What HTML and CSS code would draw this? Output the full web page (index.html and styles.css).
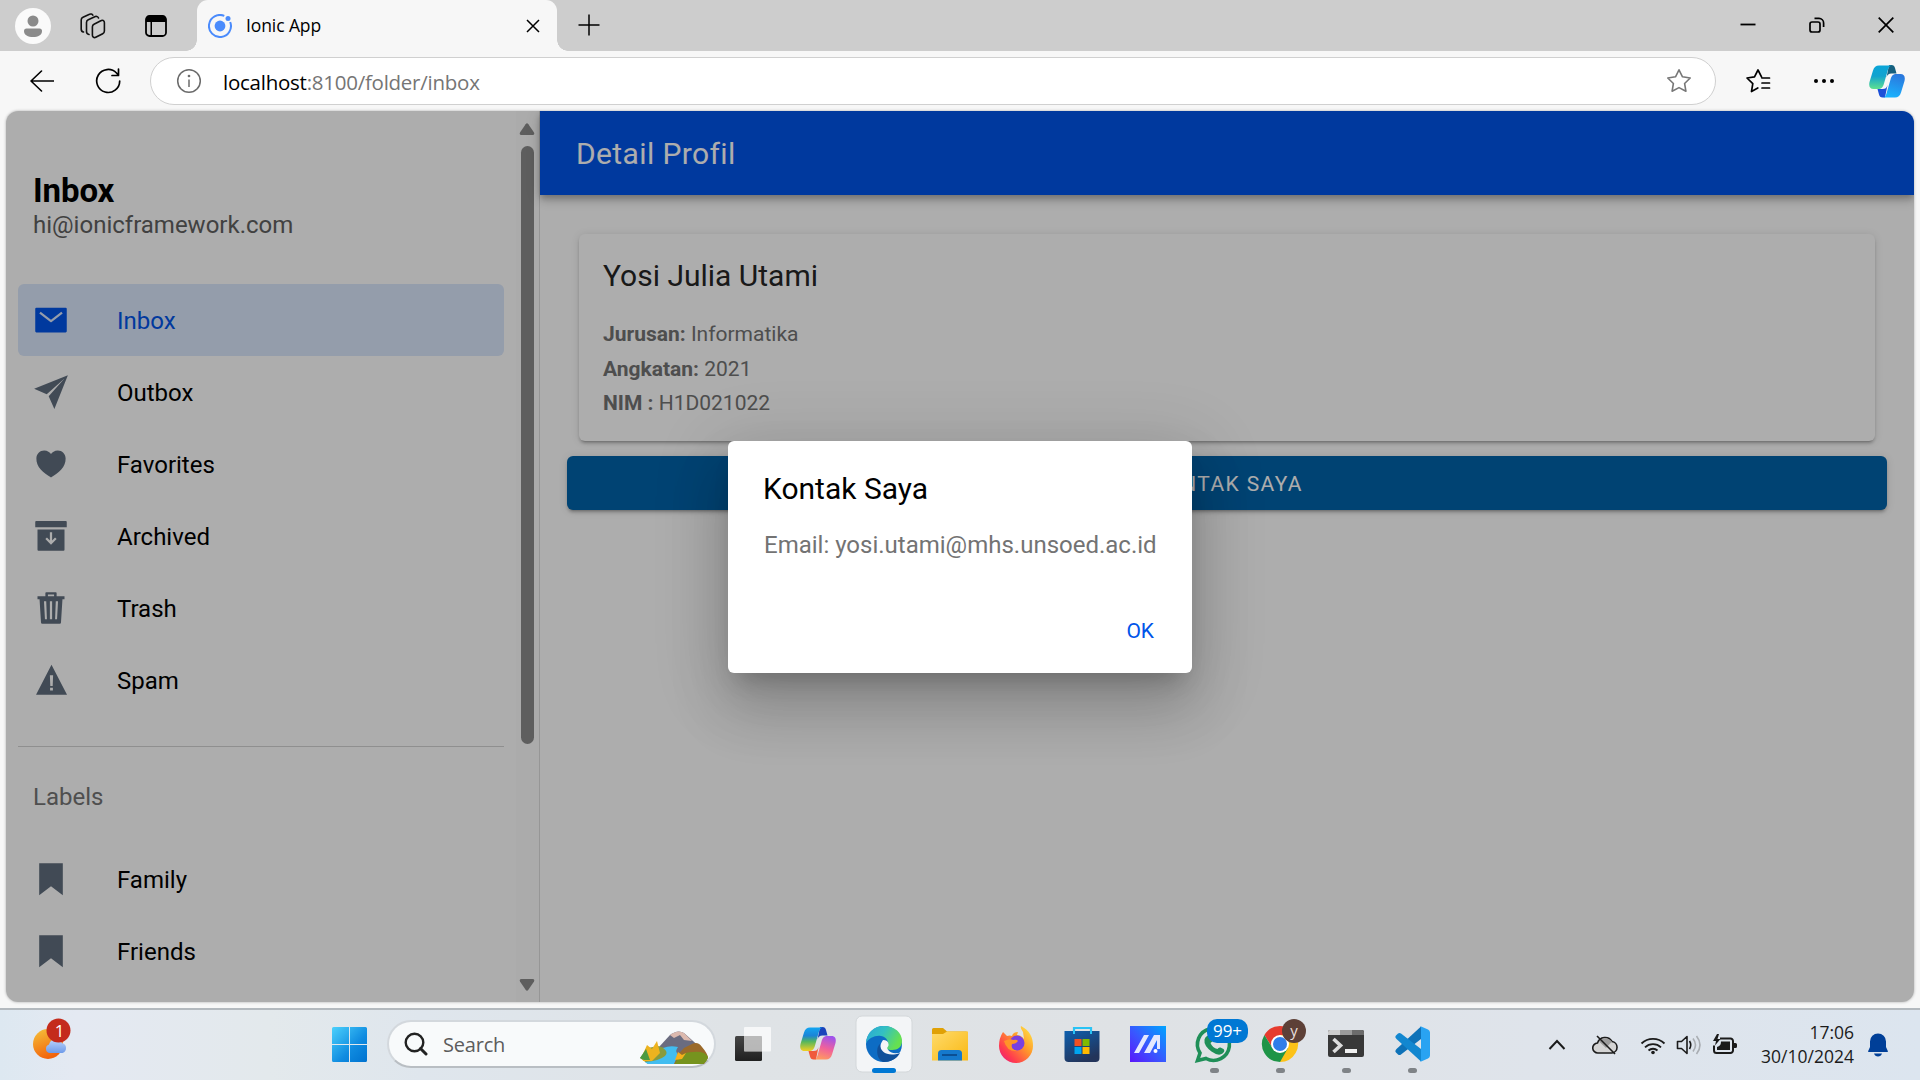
FILE: index.html
```html
<!DOCTYPE html>
<html lang="en">
<head>
<meta charset="utf-8">
<title>Ionic App</title>
<link rel="stylesheet" href="styles.css">
</head>
<body>
<svg width="0" height="0" class="defs" aria-hidden="true">
  <defs>
    <linearGradient id="gTeal" x1="0" y1="0" x2="0" y2="1"><stop offset="0" stop-color="#0aa5d8"/><stop offset=".45" stop-color="#12a3cf"/><stop offset="1" stop-color="#5ee08f"/></linearGradient>
    <linearGradient id="gBlue" x1=".6" y1="0" x2=".3" y2="1"><stop offset="0" stop-color="#2b78dd"/><stop offset="1" stop-color="#19b4ff"/></linearGradient>
    <linearGradient id="gRain" x1="0" y1="0" x2="0" y2="1"><stop offset="0" stop-color="#12a5f2"/><stop offset=".35" stop-color="#1b84d6"/><stop offset=".6" stop-color="#55b65d"/><stop offset="1" stop-color="#f2cf22"/></linearGradient>
    <linearGradient id="gPink" x1=".6" y1="0" x2=".3" y2="1"><stop offset="0" stop-color="#a053ea"/><stop offset=".5" stop-color="#f0619b"/><stop offset="1" stop-color="#ff9c5e"/></linearGradient>
    <linearGradient id="gSun" x1="0" y1="0" x2=".4" y2="1"><stop offset="0" stop-color="#f5c33b"/><stop offset="1" stop-color="#f2640c"/></linearGradient>
    <linearGradient id="gCloud" x1="0" y1="0" x2="0" y2="1"><stop offset="0" stop-color="#bcd4fb"/><stop offset="1" stop-color="#6e9bea"/></linearGradient>
    <linearGradient id="gWin" gradientUnits="userSpaceOnUse" x1="16" y1="17" x2="51" y2="52"><stop offset="0" stop-color="#4cd1fc"/><stop offset=".6" stop-color="#0f8be0"/><stop offset="1" stop-color="#0072cf"/></linearGradient>
    <linearGradient id="gDark" x1="0" y1="0" x2="0" y2="1"><stop offset="0" stop-color="#454545"/><stop offset="1" stop-color="#202020"/></linearGradient>
    <linearGradient id="gEdgeTop" x1="0" y1="0" x2="1" y2=".4"><stop offset="0" stop-color="#2aa6d6"/><stop offset=".5" stop-color="#33c0c3"/><stop offset="1" stop-color="#66e050"/></linearGradient>
    <linearGradient id="gFolder" x1="0" y1="0" x2="1" y2="1"><stop offset="0" stop-color="#ffdb6b"/><stop offset="1" stop-color="#f9b813"/></linearGradient>
    <linearGradient id="gFire" x1="1" y1="0" x2="0" y2="1"><stop offset="0" stop-color="#fff04a"/><stop offset=".4" stop-color="#ff9a2a"/><stop offset=".75" stop-color="#ff3a4f"/><stop offset="1" stop-color="#e0158a"/></linearGradient>
    <linearGradient id="gStore" x1="0" y1="0" x2=".5" y2="1"><stop offset="0" stop-color="#0d5fae"/><stop offset="1" stop-color="#23345a"/></linearGradient>
    <linearGradient id="gAsus" x1="1" y1="0" x2="0" y2="1"><stop offset="0" stop-color="#00a5ff"/><stop offset=".55" stop-color="#3a55ff"/><stop offset="1" stop-color="#5b16fa"/></linearGradient>
  </defs>
</svg>

<div class="tabs">
  <span class="avatar"><svg width="36" height="36" viewBox="0 0 36 36"><circle cx="18" cy="13" r="5.500" fill="#8b8b8b"/><path d="M9 23a2.500 2.500 0 0 1 2.500-2.500h13A2.500 2.500 0 0 1 27 23c0 4-4 6-9 6s-9-2-9-6z" fill="#8b8b8b"/></svg></span>
  <svg class="ws" width="26" height="26" viewBox="0 0 26 26" fill="none" stroke="#111" stroke-width="1.600" stroke-linejoin="round" stroke-linecap="round"><path d="M14 11.200 20.800 7.800a2.200 2.200 0 0 1 3.600 1.800v8.400a3 3 0 0 1-1.700 2.700l-7 3.600a2.200 2.200 0 0 1-3.300-2v-8.500a3 3 0 0 1 1.600-2.600z"/><path d="M9 21.500a3 3 0 0 1-2.500-3V9.500A3 3 0 0 1 8.300 6.800l7-3.200A2.400 2.400 0 0 1 18.500 5M3.500 19A3 3 0 0 1 1.200 16V7A3 3 0 0 1 3 4.300l6.500-3A2.400 2.400 0 0 1 12.800 2.200"/></svg>
  <svg class="vt" width="22" height="22" viewBox="0 0 22 22"><rect x="1" y="1" width="20" height="20" rx="3.500" fill="none" stroke="#000" stroke-width="1.800"/><path d="M1 7V4a3 3 0 0 1 3-3h14a3 3 0 0 1 3 3v3zM5.500 7h1.500v14h-1.500z"/></svg>
  <div class="tab">
    <svg width="24" height="24" viewBox="0 0 24 24"><circle cx="12" cy="12" r="5.400" fill="#4a8bfc"/><circle cx="20" cy="4.500" r="2.500" fill="#4a8bfc"/><path d="M16.300 1.900A11 11 0 1 0 22.200 8" fill="none" stroke="#4a8bfc" stroke-width="2"/></svg>
    <span class="tab-title">Ionic App</span>
    <svg class="tab-x" width="14" height="14" viewBox="0 0 14 14" stroke="#000" stroke-width="1.500"><path d="M1 1l12 12M13 1 1 13"/></svg>
  </div>
  <svg class="plus" width="22" height="22" viewBox="0 0 22 22" stroke="#000" stroke-width="1.500"><path d="M11 .5v21M.5 11h21"/></svg>
  <div class="winbtns">
    <svg width="16" height="16" viewBox="0 0 16 16" stroke="#000" stroke-width="1.800"><path d="M.5 7.500h15"/></svg>
    <svg width="16" height="16" viewBox="0 0 16 16" fill="none" stroke="#000" stroke-width="1.700"><rect x="1" y="5" width="10" height="10" rx="2"/><path d="M5.500 1.400H10a4.600 4.600 0 0 1 4.600 4.600v4"/></svg>
    <svg width="16" height="16" viewBox="0 0 16 16" stroke="#000" stroke-width="1.700"><path d="M.7.700l14.600 14.600M15.300.700.700 15.300"/></svg>
  </div>
</div>

<div class="toolbar">
  <svg width="24" height="24" viewBox="0 0 24 24" fill="none" stroke="#000" stroke-width="1.600" stroke-linecap="round" stroke-linejoin="round"><path d="M23.500 12H1M11.500 2 1 12l10.500 10"/></svg>
  <svg class="reload" width="26" height="26" viewBox="0 0 26 26" fill="none" stroke="#000" stroke-width="1.700" stroke-linecap="round" stroke-linejoin="round"><path d="M24.700 13A11.500 11.500 0 1 1 21.500 5l1.800 2M23.500 1v6.500H17"/></svg>
  <div class="address">
    <svg width="26" height="26" viewBox="0 0 26 26" fill="none" stroke="#6b6b6b" stroke-width="1.500"><circle cx="13" cy="13" r="11.300"/><path d="M13 11.500v7.500" /><circle cx="13" cy="8" r=".6" fill="#6b6b6b"/></svg>
    <span class="url"><b>localhost</b>:8100/folder/inbox</span>
    <svg class="star" width="26" height="26" viewBox="0 0 26 26" fill="none" stroke="#777" stroke-width="1.600" stroke-linejoin="round"><path d="M13 1.800l3.500 7 7.700 1.200-5.600 5.500 1.300 7.700L13 19.600l-6.900 3.600 1.300-7.700L1.800 10l7.700-1.200z"/></svg>
  </div>
  <svg class="favs" width="26" height="26" viewBox="0 0 26 26" fill="none" stroke="#000" stroke-width="1.700" stroke-linejoin="round" stroke-linecap="round"><path d="M12.800 20 6.500 23.500l1.300-7.800L2 10l7.500-1.100L13 2l3.500 6.900M17 10h7.500M17 15h7.500M17 20h7.500"/></svg>
  <svg class="more" width="20" height="6" viewBox="0 0 20 6"><circle cx="2" cy="3" r="2"/><circle cx="10" cy="3" r="2"/><circle cx="18" cy="3" r="2"/></svg>
  <svg class="copilot" width="36" height="33" viewBox="0 0 36 33"><path d="M20 0h2.500c2 0 3 1 3.500 3l1.500 5.500h-5c-3 0-4 1-5 4z" fill="#16607f"/><path d="M16 32.500h-2.500c-2 0-3-1-3.500-3L8.500 24h5c3 0 4-1 5-4z" fill="#1b4fd8"/><path d="M10 .5h13c-2 0-3 1-4 4l-4 14c-1.200 4-2.500 5.500-6 5.500H4.500C1 24-.5 21.500.5 17L4 5.500C5 2 7 .5 10 .5z" fill="url(#gTeal)"/><path d="M26 32.500H13.500c2 0 3-1 4-4l4-14c1.200-4 2.500-5.500 6-5.500h4c3.500 0 5 2.500 4 7L32 27.500c-1 3.500-3 5-6 5z" fill="url(#gBlue)"/></svg>
</div>

<div class="page">
  <aside class="menu">
    <div class="menu-body">
      <h1>Inbox</h1>
      <p class="mail">hi@ionicframework.com</p>
      <ul class="items">
        <li class="item selected"><svg viewBox="0 0 512 512"><path d="M464 80H48a16 16 0 0 0-16 16v320a16 16 0 0 0 16 16h416a16 16 0 0 0 16-16V96a16 16 0 0 0-16-16zM265.820 284.630a16 16 0 0 1-19.640 0L89.550 162.810l19.640-25.260L256 251.730l146.810-114.180 19.640 25.260z"/></svg>Inbox</li>
        <li class="item"><svg viewBox="0 0 512 512"><path d="M496 16 15.880 208 195 289 448 64 223 317l81 179z"/></svg>Outbox</li>
        <li class="item"><svg viewBox="0 0 512 512"><path d="M256 448l-9-6c-42.780-28.570-96.910-60.860-137-108.320-42.250-50-62.520-101.350-62-157C48.630 114.540 98.460 64 159.080 64c48.110 0 80.100 28 96.920 48.210C272.820 92 304.810 64 352.920 64c60.620 0 110.450 50.540 111.080 112.650.54 55.640-19.740 107-62 157-40.090 47.490-94.220 79.780-137 108.350z"/></svg>Favorites</li>
        <li class="item"><svg viewBox="0 0 512 512"><path fill-rule="evenodd" d="M44 44h424a12 12 0 0 1 12 12v76H32V56a12 12 0 0 1 12-12zM64 164v287a13 13 0 0 0 13 13h358a13 13 0 0 0 13-13V164zm192 216-80-80 22.630-22.630L240 318.740V204h32v114.740l41.370-41.370L336 300z"/></svg>Archived</li>
        <li class="item"><svg viewBox="0 0 512 512"><path fill-rule="evenodd" d="M176 88V44a12 12 0 0 1 12-12h136a12 12 0 0 1 12 12v44h112v44h-29l-21 330a18 18 0 0 1-18 18H132a18 18 0 0 1-18-18L93 132H64V88zm36 0h88V64h-88zM156 160l14 256h28l-10-256zm84 0v256h32V160zm84 0-10 256h28l14-256z"/></svg>Trash</li>
        <li class="item"><svg viewBox="0 0 512 512"><path fill-rule="evenodd" d="M263 40 43 464h441zM240 190h46l-6 150h-34zM243 366h40v40h-40z"/></svg>Spam</li>
      </ul>
      <h2>Labels</h2>
      <ul class="items labels">
        <li class="item"><svg viewBox="0 0 512 512"><path d="M424 486 256 360 88 486V32h336z"/></svg>Family</li>
        <li class="item"><svg viewBox="0 0 512 512"><path d="M424 486 256 360 88 486V32h336z"/></svg>Friends</li>
      </ul>
    </div>
    <div class="scroll">
      <svg width="16" height="12" viewBox="0 0 16 12"><path d="M6.600 1.200Q8-.5 9.400 1.200L15 9.500Q16 12 13.500 12h-11Q0 12 1 9.500z"/></svg>
      <div class="thumb"></div>
      <svg width="16" height="12" viewBox="0 0 16 12"><path d="M6.600 10.800Q8 12.500 9.400 10.800L15 2.500Q16 0 13.500 0h-11Q0 0 1 2.500z"/></svg>
    </div>
  </aside>
  <main>
    <header>Detail Profil</header>
    <section class="card">
      <h3>Yosi Julia Utami</h3>
      <p><strong>Jurusan:</strong> Informatika</p>
      <p><strong>Angkatan:</strong> 2021</p>
      <p><strong>NIM :</strong> H1D021022</p>
    </section>
    <div class="btn">KONTAK SAYA</div>
  </main>
  <div class="backdrop">
    <div class="alert">
      <h4>Kontak Saya</h4>
      <p>Email: yosi.utami@mhs.unsoed.ac.id</p>
      <span class="ok">OK</span>
    </div>
  </div>
</div>

<div class="taskbar">
  <svg class="weather" width="50" height="70" viewBox="0 0 50 70"><circle cx="23" cy="34" r="15" fill="url(#gSun)"/><path d="M24 43a4.500 4.500 0 0 1 0-8.500 7 7 0 0 1 13-1.500 5.200 5.200 0 0 1 .5 10z" fill="url(#gCloud)"/><circle cx="33.500" cy="20.500" r="12" fill="#c42b1c"/><text x="34.500" y="26.500" class="b1" text-anchor="middle">1</text></svg>
  <svg class="cell start" viewBox="0 0 66 70" fill="url(#gWin)"><path d="M17.500 17H33v17H16V18.500q0-1.500 1.500-1.500zM34 17h15.500q1.500 0 1.500 1.500V34H34zM16 35h17v17H17.500q-1.500 0-1.500-1.500zM34 35h17v15.500q0 1.500-1.500 1.500H34z"/></svg>
  <div class="search">
    <svg width="24" height="24" viewBox="0 0 24 24" fill="none" stroke="#222" stroke-width="2.400"><circle cx="10.500" cy="10.500" r="8.800"/><path d="M16.500 16.500 22 22" stroke-width="3" stroke-linecap="round"/></svg>
    <span>Search</span>
    <svg class="scene" width="70" height="34" viewBox="0 0 70 34"><path d="M20 16 31 4q8-6 14-2l18 16v8H20z" fill="#6a6c80"/><path d="m31 4 4 3 6-3 4 5 8 1-8-8q-6-4-14 2z" fill="#dcb9ae"/><path d="M1 27 9 17l10-2 16 5-6 13H9z" fill="#8a9b3c"/><path d="m45 17 8-4q6-3 10 3 6 7 6 11l-4 6H30z" fill="#9b6a2a"/><path d="M36 33q4-12 18-12 12-1 15 5-1 5-5 7z" fill="#76931e"/><path d="M24 17q7-3 15-1-3 4-1 6 1 3-3 11H9q-2-1-3-2 14-1 20-6 4-4-2-8z" fill="#42bdf0"/><path d="m3 25 5-11 5 4 5-8 3 12-8 8H4z" fill="#eeb31f"/><path d="m1 27 6-9 4 11H5z" fill="#4c9a41"/><path d="m36 29 3-8 4 3 4-2-4 6z" fill="#f7b01b"/></svg>
  </div>
  <svg class="cell" viewBox="0 0 66 70"><rect x="19" y="26" width="27" height="25" rx="1.500" fill="url(#gDark)"/><rect x="28" y="17" width="27" height="24.500" rx="1" fill="#fff" fill-opacity=".72"/><path d="M28 26h18v15.500H28z" fill="#aaa" fill-opacity=".5"/></svg>
  <svg class="cell first" viewBox="0 0 66 70"><g transform="translate(15 17)"><path d="M20 0h2.500c2 0 3 1 3.500 3l1.500 5.500h-5c-3 0-4 1-5 4z" fill="#1a43bb"/><path d="M16 32.500h-2.500c-2 0-3-1-3.500-3L8.500 24h5c3 0 4-1 5-4z" fill="#f05a3c"/><path d="M10 .5h13c-2 0-3 1-4 4l-4 14c-1.200 4-2.500 5.500-6 5.500H4.500C1 24-.5 21.500.5 17L4 5.500C5 2 7 .5 10 .5z" fill="url(#gRain)"/><path d="M26 32.500H13.500c2 0 3-1 4-4l4-14c1.200-4 2.500-5.500 6-5.500h4c3.500 0 5 2.500 4 7L32 27.500c-1 3.500-3 5-6 5z" fill="url(#gPink)"/></g></svg>
  <svg class="cell" viewBox="0 0 66 70"><rect x="5" y="6" width="56" height="56" rx="6" fill="#f3f5f7" stroke="#d3d7da"/><circle cx="33" cy="34" r="18" fill="#0d6cc4"/><path d="M15 33C16 22 23 16 33 16c11 0 18 7 18 15 0 6-4 9-10 9-4 0-6-1-5-3 3-4 0-10-6-11-6-1-12 2-15 7z" fill="url(#gEdgeTop)"/><path d="M32 30q5 0 5.500 4c.5 3-2 3-1 5 3 5 9 5 14 3l-2 5-6 1c-11 0-17-9-10.500-18z" fill="#f3f5f7"/><path d="M29 34c0 9 9 13 20 9-3 6-10 9-16 9-7-1-9-14-4-18z" fill="#10509a"/><rect x="21" y="58" width="24" height="5" rx="2.500" fill="#0078d4"/></svg>
  <svg class="cell" viewBox="0 0 66 70"><path d="M15 19.500Q15 18 16.500 18H26l4 3.500h19q2 0 2 2V28H15z" fill="#e0a106"/><path d="M15 24h11l4-2.500h21v29H15z" fill="url(#gFolder)"/><path d="M21 50.500v-7q0-3.500 3.500-3.500h17q3.500 0 3.500 3.500v7z" fill="#1579cd"/><path d="M25 45h15" stroke="#0b4f94" stroke-width="2"/></svg>
  <svg class="cell" viewBox="0 0 66 70"><path d="M20 22l4 4q3-1 5 0 1-4 6-4l-1 3q4 0 7 4l-1-7q-3-4-2-6 6 3 9 8 3 5 3 12a17 17 0 0 1-34 0q0-8 4-14z" fill="url(#gFire)"/><circle cx="34" cy="33" r="7.500" fill="#7a3fe0"/><path d="M21 31q6-3 9-1 4-1 5 1-2 3-6 3-2 5 5 7-10 1-13-10z" fill="#ff9428"/></svg>
  <svg class="cell" viewBox="0 0 66 70"><path d="M25 24v-6h17v6" fill="none" stroke="#29c3f5" stroke-width="2.200"/><path d="M15.500 21h35v27q0 4-4 4h-27q-4 0-4-4z" fill="url(#gStore)"/><path d="M25 21v3M42 21v3" stroke="#29c3f5" stroke-width="2"/><path d="M25.500 29h7v7h-7z" fill="#f25022"/><path d="M33.500 29h7v7h-7z" fill="#7fba00"/><path d="M25.500 37h7v7h-7z" fill="#00a4ef"/><path d="M33.500 37h7v7h-7z" fill="#ffb900"/></svg>
  <svg class="cell" viewBox="0 0 66 70"><path d="M15 16h36v36H15z" fill="url(#gAsus)"/><path d="M19 43 29 25h5L24 43zM29 43l10-18h6v14h-3v-9l-7 13z" fill="#e4e8ff"/><circle cx="40.500" cy="41" r="2" fill="#fff"/></svg>
  <svg class="cell" viewBox="0 0 66 70"><path d="M16.500 50.500 19 43a16 16 0 1 1 6 5.500z" fill="none" stroke="#1f8f58" stroke-width="3.600"/><path d="M26 26q3-2 4.500 1l1 3q0 2-2 3 2 5 7 6 1-2 3-1.500l3 1.500q2 2-1 4.500-4 3-11-2-8-6-7-12 .5-2.500 2.500-3.500z" fill="#1f8f58"/><rect x="26" y="9" width="41" height="24" rx="10" fill="#0078d4"/><text x="46.500" y="27" class="b99" text-anchor="middle">99+</text><rect x="29" y="58" width="9" height="5" rx="2.500" fill="#7f8387"/></svg>
  <svg class="cell" viewBox="0 0 66 70"><path d="M33 34 33 52A18 18 0 0 0 48.600 25H33z" fill="#fcc218"/><path d="M33 25h15.600A18 18 0 0 0 17.400 25l8 13z" fill="#e63b2e"/><path d="M17.400 25A18 18 0 0 0 33 52l8-14-15.600 0z" fill="#1e9447"/><circle cx="33" cy="34" r="9" fill="#fff"/><circle cx="33" cy="34" r="7" fill="#2f7de9"/><circle cx="47" cy="21" r="12" fill="#5d4037"/><text x="47" y="25.500" class="by" text-anchor="middle">y</text><rect x="29" y="58" width="9" height="5" rx="2.500" fill="#7f8387"/></svg>
  <svg class="cell" viewBox="0 0 66 70"><rect x="15" y="20" width="36" height="27" rx="2" fill="#383838"/><path d="M15 25v-3q0-2 2-2h10v5z" fill="#ccc"/><path d="M27 20h12v5H27z" fill="#9b9b9b"/><path d="M39 20h10q2 0 2 2v3H39z" fill="#6b6b6b"/><path d="m20.500 29 7 6.500-7 6.500" fill="none" stroke="#ddd" stroke-width="3.600"/><path d="M32 39h12v4H32z" fill="#f0f0f0"/><rect x="29" y="58" width="9" height="5" rx="2.500" fill="#7f8387"/></svg>
  <svg class="cell" viewBox="0 0 66 70"><path d="M42 16.500 17.500 39q-2 2-.5 3.500l2 2q1.500 1 3 0L42 29z" fill="#0e72b8"/><path d="M42 51.500 17.500 29q-2-2-.5-3.500l2-2q1.500-1 3 0L42 39z" fill="#1287d0"/><path d="M41 16l8 3.500q2 1 2 3v23q0 2-2 3L41 52q1-.5 1-2V18q0-1.500-1-2z" fill="#29a3f2"/><rect x="29" y="58" width="9" height="5" rx="2.500" fill="#7f8387"/></svg>
  <div class="tray">
    <svg width="18" height="12" viewBox="0 0 18 12" fill="none" stroke="#1b1b1b" stroke-width="2"><path d="m1.500 10 7.500-8 7.500 8"/></svg>
    <svg class="t2" width="26" height="22" viewBox="0 0 26 22"><path d="M6 19a5 5 0 0 1-.5-10A8 8 0 0 1 20 7.500a5.800 5.800 0 0 1 0 11.500z" fill="#d4d4d4" stroke="#1b1b1b" stroke-width="1.600"/><path d="M7 7.500q6-7 13 0L14 14z" fill="#9c9c9c"/><path d="m5 2 18 18" stroke="#1b1b1b" stroke-width="1.600"/></svg>
    <svg class="t3" width="26" height="20" viewBox="0 0 26 20" fill="none" stroke="#1b1b1b" stroke-width="1.800"><path d="M1.500 8.500a16.500 16.500 0 0 1 23 0M5 12.300a11.500 11.500 0 0 1 16 0M8.500 15.500a6.700 6.700 0 0 1 9 0"/><circle cx="13" cy="17.500" r="1.800" fill="#1b1b1b" stroke="none"/></svg>
    <svg class="t4" width="26" height="22" viewBox="0 0 26 22" fill="none" stroke="#1b1b1b" stroke-width="1.600" stroke-linejoin="round"><path d="M1.500 7.500h4L11 2.500v17l-5.500-5h-4z"/><path d="M13.500 7q2.500 4 0 8"/><path d="M17 4.500q5 6.500 0 13M20.500 2q7 9 0 18" stroke="#a9adb2"/></svg>
    <svg class="t5" width="26" height="22" viewBox="0 0 26 22"><path d="M8 4.500h10.500a2.500 2.500 0 0 1 2.500 2.500v9.500a2.500 2.500 0 0 1-2.500 2.500h-14A2.500 2.500 0 0 1 2 16.500v-5" fill="none" stroke="#1b1b1b" stroke-width="2"/><path d="M9 7.500h9v8.500H5v-3q4-1 4-5.500zM22 9h1.500q1.500 0 1.500 1.500v2q0 1.500-1.500 1.500H22zM5 0 1 7h3L3 11.500 8.500 5H5.500L7 0z" fill="#1b1b1b"/></svg>
    <div class="clock"><span>17:06</span><span>30/10/2024</span></div>
    <svg class="bell" width="20" height="24" viewBox="0 0 20 24" fill="#003f98"><path d="M10 .5a8 8 0 0 1 8 8V14l1.800 4v1H.2v-1L2 14V8.500a8 8 0 0 1 8-8zM6 20.500h8q-1 3-4 3t-4-3z"/></svg>
  </div>
</div>
</body>
</html>
```
FILE: styles.css
```css
* { box-sizing: border-box; margin: 0; padding: 0; }
body { width: 1920px; height: 1080px; overflow: hidden; background: #f7f7f7; font-family: Roboto, sans-serif; display: flex; flex-direction: column; }
svg { display: block; flex: none; }
.defs { position: absolute; }

/* Browser tab strip */
.tabs { height: 51px; flex: none; background: #cdcdcd; display: flex; align-items: center; }
.avatar { width: 36px; height: 36px; margin-left: 15px; border-radius: 50%; background: #fafafa; }
.ws { margin-left: 29px; }
.vt { margin-left: 39px; }
.tab { position: relative; width: 360px; height: 51px; margin-left: 30px; padding: 0 17px 0 11px; display: flex; align-items: center; background: #f7f7f7; border-radius: 11px 11px 0 0; }
.tab::before, .tab::after { content: ""; position: absolute; bottom: 0; width: 11px; height: 11px; }
.tab::before { left: -11px; background: radial-gradient(circle at 0 0, transparent 10.500px, #f7f7f7 11px); }
.tab::after { right: -11px; background: radial-gradient(circle at 100% 0, transparent 10.500px, #f7f7f7 11px); }
.tab-title { margin: -2px 0 0 14px; font: 17.500px/24px "Open Sans", sans-serif; letter-spacing: -.1px; }
.tab-x { margin-left: auto; }
.plus { margin: -2px 0 0 21px; }
.winbtns { margin: -1px 0 0 auto; padding-right: 26px; display: flex; gap: 53px; }

/* Navigation bar */
.toolbar { height: 60px; flex: none; display: flex; align-items: center; padding-left: 30px; }
.reload { margin-left: 41px; }
.address { width: 1566px; height: 48px; margin-left: 29px; padding: 0 23px 0 25px; display: flex; align-items: center; background: #fff; border: 1px solid #d0d0d0; border-radius: 24px; }
.url { margin: 1px 0 0 21px; font: 20.500px/28px "Open Sans", sans-serif; color: #757575; letter-spacing: -.25px; }
.url b { font-weight: 400; color: #000; }
.star { margin-left: auto; }
.favs { margin-left: 29px; }
.more { margin-left: 43px; }
.copilot { margin-left: 35px; }

/* App viewport */
.page { position: relative; width: 1908px; height: 891px; flex: none; margin-left: 6px; display: flex; background: #fff; border-radius: 12px; overflow: hidden; box-shadow: 0 0 3px rgba(0,0,0,.3); }
.menu { width: 534px; border-right: 1px solid #dedede; display: flex; }
.menu-body { width: 510px; padding: 62px 12px 0; }
.menu h1 { margin-left: 15px; font-size: 33px; line-height: 36px; font-weight: 700; letter-spacing: -.1px; }
.mail { margin: 2px 0 45px 15px; font-size: 24px; line-height: 28px; color: #616161; }
.items { list-style: none; padding-bottom: 30px; border-bottom: 1px solid #d3d3d3; }
.labels { border: 0; }
.item { height: 72px; padding: 1px 15px 0; display: flex; align-items: center; font-size: 24px; border-radius: 6px; color: #000; }
.item svg { width: 36px; height: 36px; margin: -1px 48px 0 0; fill: #616e7e; }
.selected { background: #dbe7fc; color: #0054e9; }
.selected svg { fill: #0054e9; }
.menu h2 { margin: 36px 0 32px 15px; font-size: 24px; line-height: 28px; font-weight: 400; color: #757575; }
.scroll { width: 23px; padding: 12px 1px 11px 0; background: #fcfcfc; display: flex; flex-direction: column; align-items: center; fill: #8b8b8b; }
.thumb { width: 13px; height: 598px; margin: 11px 0 auto; border-radius: 7px; background: #8b8b8b; }

main { flex: 1; display: flex; flex-direction: column; }
header { height: 84px; padding: 1px 0 0 36px; font-size: 30px; line-height: 84px; font-weight: 400; letter-spacing: .375px; color: #fff; background: #0054e9; box-shadow: 0 3px 6px -1px rgba(0,0,0,.2), 0 6px 8px rgba(0,0,0,.14), 0 2px 15px rgba(0,0,0,.12); }
.card { height: 207px; margin: 39px 39px 0; padding: 24px; border-radius: 6px; background: #fff; box-shadow: 0 4px 2px -3px rgba(0,0,0,.2), 0 3px 3px rgba(0,0,0,.14), 0 1px 8px rgba(0,0,0,.12); }
.card h3 { margin-bottom: 23px; font-size: 30px; line-height: 36px; font-weight: 400; color: #262626; }
.card p { font-size: 21px; line-height: 34.500px; color: #737373; }
.btn { height: 54px; margin: 15px 27px 0; border-radius: 6px; background: #0163aa; color: #fff; font-size: 21px; line-height: 56px; font-weight: 400; letter-spacing: 1.400px; text-align: center; box-shadow: 0 4px 2px -3px rgba(0,0,0,.2), 0 3px 3px rgba(0,0,0,.14), 0 1px 8px rgba(0,0,0,.12); }

.backdrop { position: absolute; inset: 0; display: flex; align-items: center; justify-content: center; background: rgba(0,0,0,.32); }
.alert { width: 464px; height: 232px; padding: 30px 35px; display: flex; flex-direction: column; border-radius: 6px; background: #fff; box-shadow: 0 16px 22px -10px rgba(0,0,0,.2), 0 36px 57px 4px rgba(0,0,0,.14), 0 13px 69px 12px rgba(0,0,0,.12); }
.alert h4 { font-size: 30px; line-height: 36px; font-weight: 400; }
.alert p { margin: 24px 0 0 1px; font-size: 24px; line-height: 28px; color: #737373; white-space: nowrap; }
.ok { margin: 59px 3px 0 auto; font-size: 21px; line-height: 26px; font-weight: 400; color: #0054e9; }

/* Taskbar */
.taskbar { height: 72px; flex: none; margin-top: 6px; display: flex; align-items: center; border-top: 2px solid #b3b9be; background: linear-gradient(90deg, #dde8f1 0, #e4e9f2 4%, #e3e9ec 14%, #dfe6ed 22%, #dfe3e6 38%, #dfe2e5 60%, #dfe4eb 80%, #dce5ef 100%); font-family: "Open Sans", sans-serif; }
.weather { margin-left: 25px; }
.cell { width: 66px; height: 70px; overflow: visible; }
.start { margin-left: 241px; }
.first { margin-left: 3px; }
.search { width: 329px; height: 48px; margin: -2px 0 0 5px; padding: 0 5px 0 15px; display: flex; align-items: center; background: #f8fafb; border: 2px solid #d3d8dd; border-bottom-color: #b9bec3; border-radius: 24px; font-size: 20px; letter-spacing: -.2px; color: #5c5c5c; }
.search span { margin-left: 15px; }
.scene { margin: 7px 0 0 auto; }
.b1 { font-size: 17px; fill: #fff; }
.b99 { font-size: 17px; fill: #fff; }
.by { font-size: 15px; fill: #e8dfdc; }
.tray { margin-left: auto; padding-right: 32px; display: flex; align-items: center; }
.t2 { margin-left: 26px; }
.t3 { margin-left: 22px; }
.t4 { margin-left: 10px; }
.t5 { margin-left: 10px; }
.clock { width: 116px; margin-top: -2px; display: flex; flex-direction: column; align-items: flex-end; font-size: 17.500px; line-height: 24px; color: #1b1b1b; letter-spacing: 0; }
.bell { margin-left: 14px; }
```
